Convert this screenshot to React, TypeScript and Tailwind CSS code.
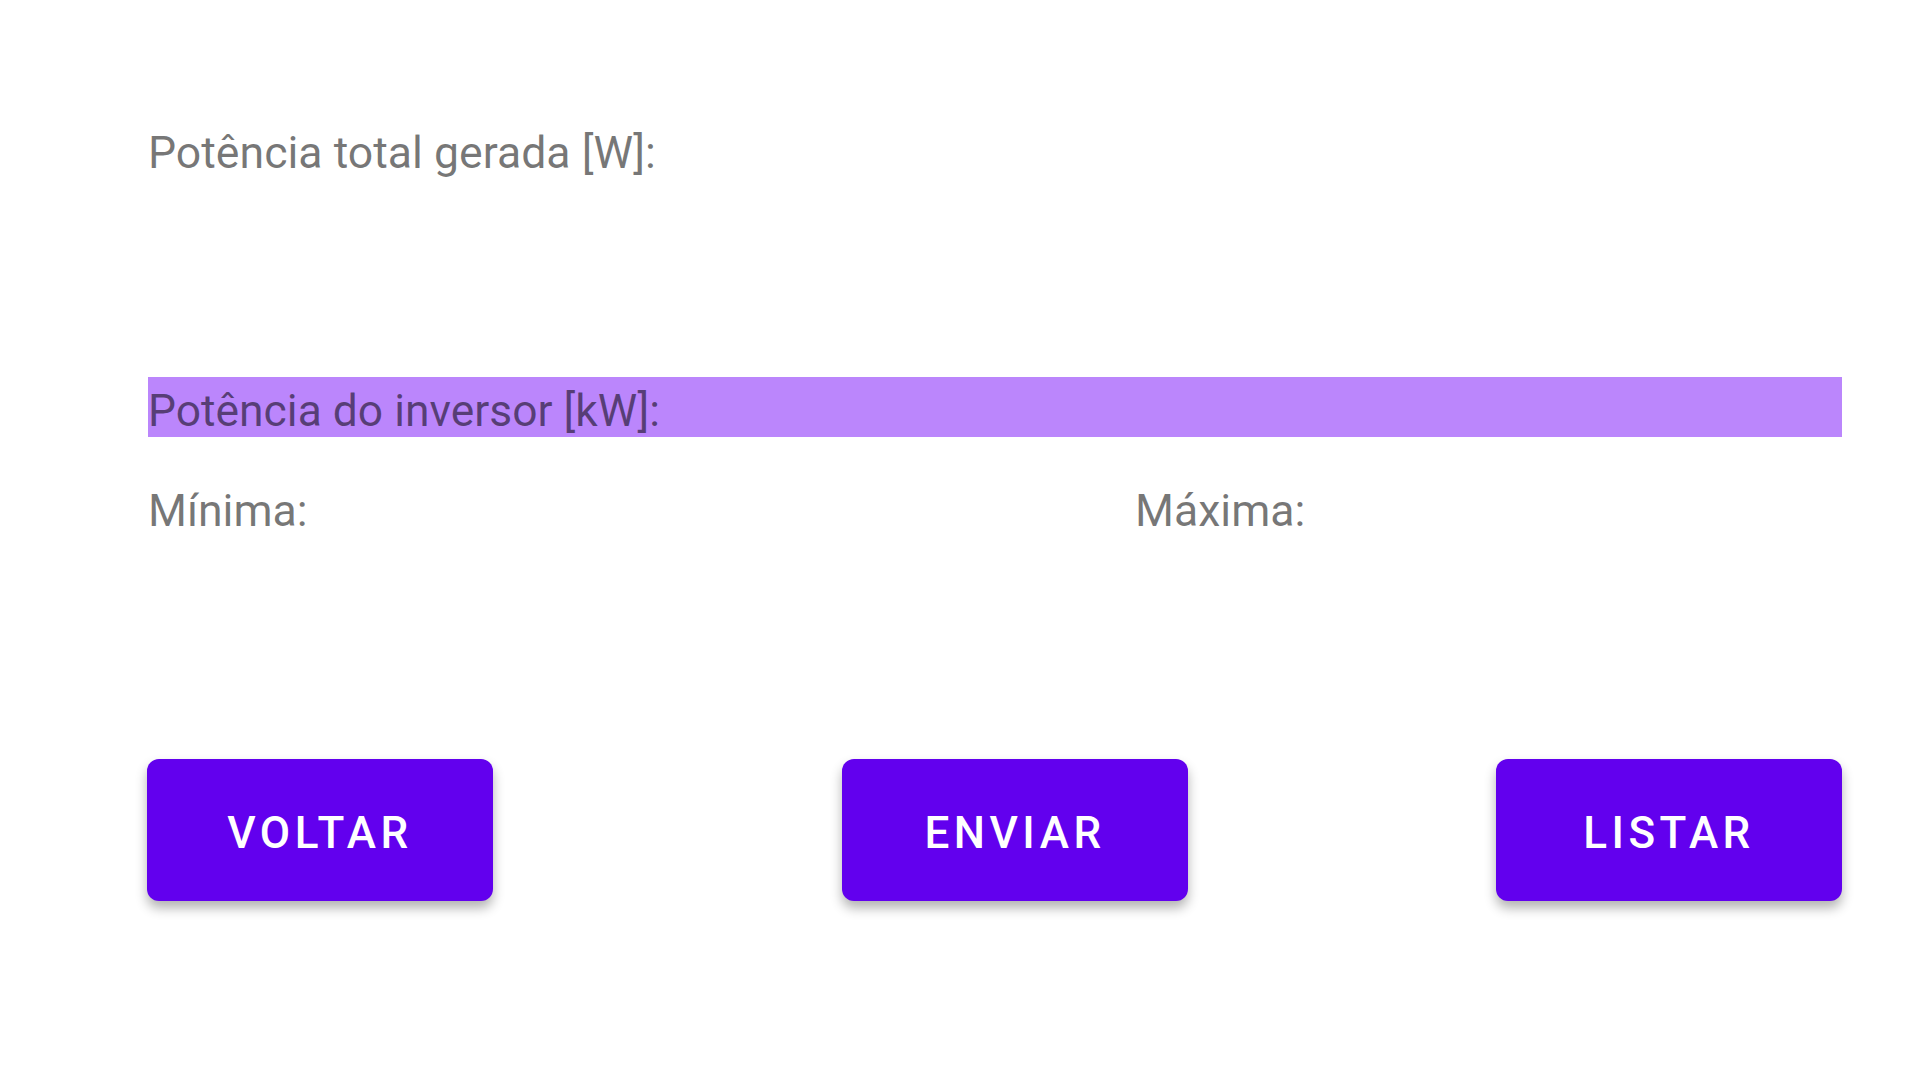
const labelFont = "font-['Roboto','Liberation_Sans',sans-serif]";

function ActionButton({ label, className }: { label: string; className?: string }) {
  return (
    <button
      className={`flex h-[142px] w-[346px] items-center justify-center rounded-[12px] bg-[#6200ee] pt-[5px] text-[44px] font-medium uppercase tracking-[4.5px] text-white shadow-[0_7px_12px_rgba(0,0,0,0.3)] ${labelFont} ${className ?? ''}`}
    >
      {label}
    </button>
  );
}

export default function App() {
  return (
    <div className={`min-h-[1080px] w-[1920px] bg-white pl-[148px] pr-[78px] pt-[127px] ${labelFont}`}>
      <div className="text-[44.6px] leading-[52px] text-black/[0.54]">Potência total gerada [W]:</div>

      {/* inverter header */}
      <div className="mt-[198px] h-[60px] bg-[#bb86fc]">
        <div className="pt-[8px] text-[44.4px] leading-[52px] text-black/[0.54]">Potência do inversor [kW]:</div>
      </div>

      <div className="mt-[48px] flex text-[44.6px] leading-[52px] text-black/[0.54]">
        <div className="w-[987px]">Mínima:</div>
        <div>Máxima:</div>
      </div>

      {/* buttons */}
      <div className="mt-[222px] flex">
        <ActionButton label="Voltar" className="-ml-px" />
        <ActionButton label="Enviar" className="ml-[349px]" />
        <ActionButton label="Listar" className="ml-[308px]" />
      </div>
    </div>
  );
}
